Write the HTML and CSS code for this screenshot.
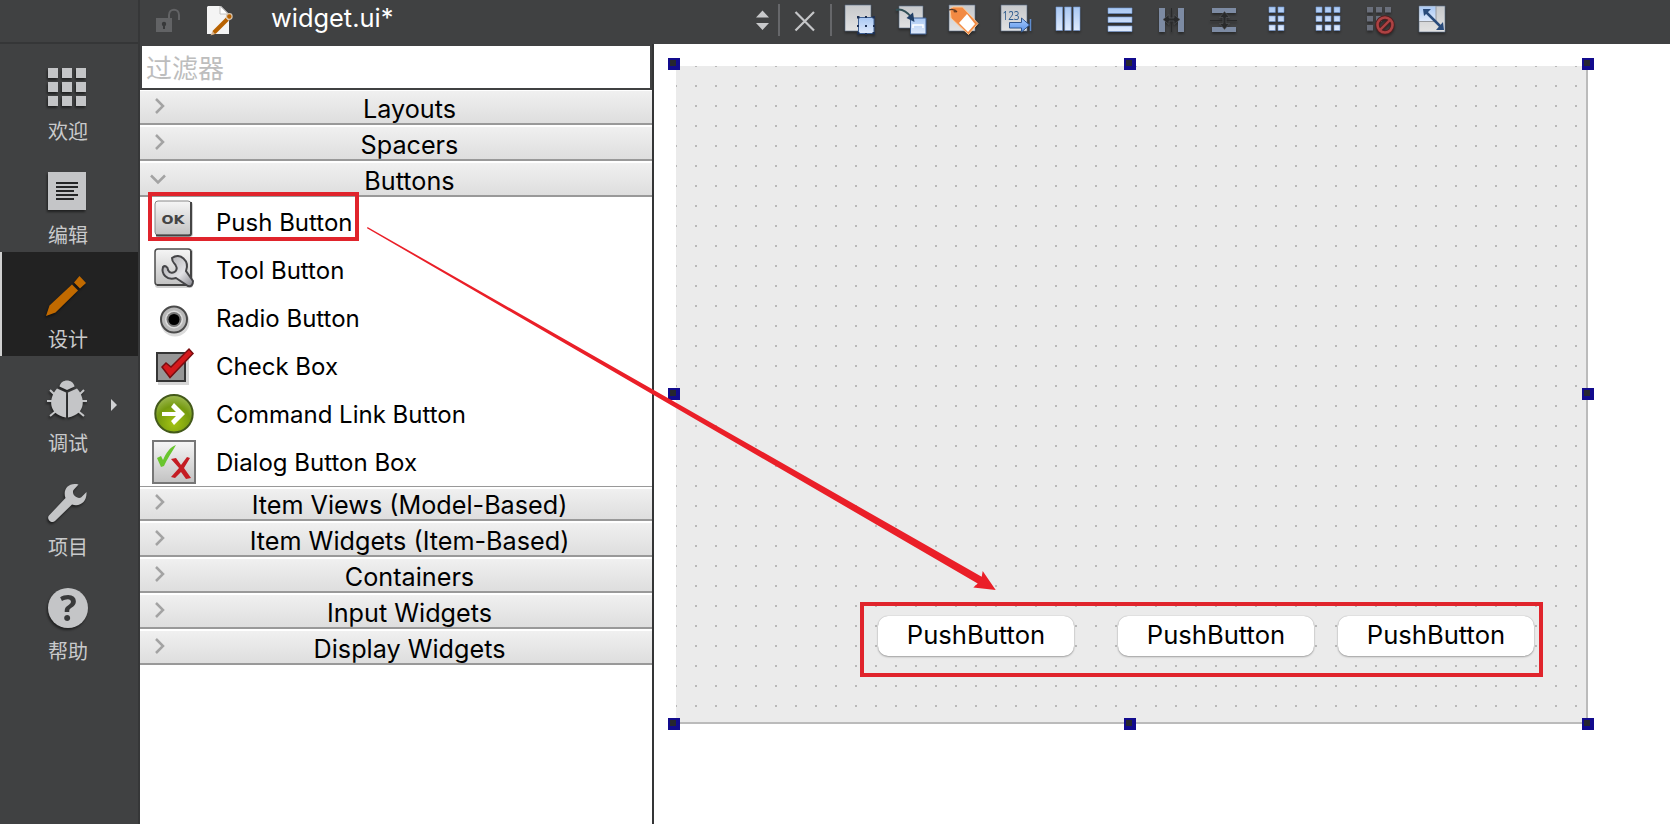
FILE: index.html
```html
<!DOCTYPE html>
<html lang="zh-CN">
<head>
<meta charset="utf-8">
<title>widget.ui</title>
<link rel="stylesheet" href="styles.css">
</head>
<body>
<svg class="defs" width="0" height="0">
  <defs>
    <linearGradient id="paper" x1="0" y1="0" x2="0" y2="1"><stop offset="0" stop-color="#c6c8cb"/><stop offset="1" stop-color="#e2e2e2"/></linearGradient>
    <linearGradient id="blue" x1="0" y1="0" x2="0" y2="1"><stop offset="0" stop-color="#a9c8f3"/><stop offset="1" stop-color="#dfeafc"/></linearGradient>
    <linearGradient id="tile" x1="0" y1="0" x2="0" y2="1"><stop offset="0" stop-color="#f6f6f6"/><stop offset="1" stop-color="#c2c2c2"/></linearGradient>
    <linearGradient id="arrowblue" x1="0" y1="0" x2="0" y2="1"><stop offset="0" stop-color="#a8ccff"/><stop offset="1" stop-color="#5a92e6"/></linearGradient>
    <radialGradient id="green" cx=".5" cy=".75" r=".75"><stop offset="0" stop-color="#a4c412"/><stop offset=".6" stop-color="#759a10"/><stop offset="1" stop-color="#9fba55"/></radialGradient>
    <linearGradient id="steel" x1="0" y1="0" x2="1" y2="1"><stop offset="0" stop-color="#a5a5a7"/><stop offset=".6" stop-color="#e2e2e6"/><stop offset="1" stop-color="#85858c"/></linearGradient>
  </defs>
</svg>
<div class="app">
  <aside class="modes">
    <div class="modes-top"></div>
    <div class="mode">
      <svg class="mode-icon" viewBox="0 0 40 40"><path d="M0 0h10v10H0zM14 0h10v10H14zM28 0h10v10H28zM0 14h10v10H0zM14 14h10v10H14zM28 14h10v10H28zM0 28h10v10H0zM14 28h10v10H14zM28 28h10v10H28z"/></svg>
      <span>欢迎</span>
    </div>
    <div class="mode">
      <svg class="mode-icon" viewBox="0 0 40 40"><path d="M0 0h38v38H0z"/><path class="ink" d="M8 11h22M8 15h22M8 19h18M8 23h22M8 27h18"/></svg>
      <span>编辑</span>
    </div>
    <div class="mode active">
      <svg class="mode-icon orange" viewBox="0 0 40 40"><path d="M-2 40L1.500 29.500L24 8.500L30 14.500L7.500 36.500zM26 6.500L31.500 0L38 7L32 12.500z"/></svg>
      <span>设计</span>
    </div>
    <div class="mode">
      <svg class="mode-icon" viewBox="0 0 40 40"><path d="M11.500 6.500C13-1.500 25-1.500 26.500 6.500L19 10z"/><path d="M9 8.500L18 12.500V37.500C-1 34 1 17 9 8.500zM29 8.500L20 12.500V37.500C39 34 37 17 29 8.500z"/><path class="legs" d="M2 10l5 5M-1 21h6M2 36l6-5M36 10l-5 5M39 21h-6M36 36l-6-5"/></svg>
      <span>调试</span>
      <svg class="mode-more" viewBox="0 0 6 12"><path d="M0 0L6 6L0 12z"/></svg>
    </div>
    <div class="mode">
      <svg class="mode-icon" viewBox="0 0 40 40"><path d="M30.500 .5C20-2 14.500 6 17.500 14L1 31.500C-2 35 3.500 40.500 7 37L24 20.500C32 23 39 18 38.500 8L33 13.500C29 15.500 23 10 25.500 6z"/></svg>
      <span>项目</span>
    </div>
    <div class="mode">
      <svg class="mode-icon" viewBox="0 0 40 40"><circle cx="20" cy="20" r="20"/><text class="question" x="20.300" y="33" text-anchor="middle">?</text></svg>
      <span>帮助</span>
    </div>
  </aside>

  <div class="work">
    <header class="toolbar">
      <svg class="file-icons" viewBox="140 0 120 44"><path d="M156 18h16v14h-16z" fill="#626365"/><path d="M169 20v-5c0-7 10-7 10 0v5" fill="none" stroke="#626365" stroke-width="2"/><circle cx="164" cy="24" r="2.200" fill="#38393a"/><path d="M163 24h2v5h-2z" fill="#38393a"/><path d="M208 6h13l8 8v20h-22V7z" fill="#f4f4f4"/><path d="M220 6v8h8z" fill="#fff" stroke="#b5b5b5" stroke-width=".8"/><path d="M213 30.500l13-13 3 3-13 13-4 1.500z" fill="#b86200"/><circle cx="229.300" cy="16.500" r="2.800" fill="#b86200" stroke="#d7c3ad" stroke-width="1.200"/><path d="M226 17.500l3 3" stroke="#e6d8c8" stroke-width="1"/><path d="M210.500 35.500l2-4.500 2.500 3z" fill="#d8b690"/></svg>
      <span class="file-name">widget.ui*</span>
      <svg class="file-tools" viewBox="740 0 94 44"><path d="M756 17.500L762.500 10.500L769 17.500zM756 23L762.500 30L769 23z" fill="#c8c9cb"/><path d="M778 4h2v32h-2zM830 4h2v32h-2z" fill="#66676a"/><path d="M795.500 12l18.500 18.500M814 12l-18.500 18.500" stroke="#c5c6c8" stroke-width="2.200"/></svg>
      <div class="actions">
        <svg viewBox="0 0 52 44"><path class="paper" d="M11 5h26v26H11z"/><path class="bluebox" d="M24.500 17.500h15.500v16H24.500z"/><path d="M23 16h2.500v2.500H23zM31 16h2v2h-2zM38.500 16H41v2.500h-2.500zM23 25h2v2h-2zM23 32h2.500v2.500H23zM31 25h2v2h-2zM39 25h2v2h-2zM31 33h2v2h-2zM38.500 32H41v2.500h-2.500z" fill="#1f3153"/></svg>
        <svg viewBox="0 0 52 44"><path class="paper" d="M13 6h24v22H13z"/><path class="bluebox" d="M24.500 18h15.500v16H24.500z"/><path d="M10 10C17 8 22 13 26 18" fill="none" stroke="#304f55" stroke-width="2"/><path d="M28.500 22l-8-4 6.500-5.500z" fill="#203e65"/><path d="M27 28v-3h10v3" fill="none" stroke="#fff" stroke-width="1.500"/></svg>
        <svg viewBox="0 0 52 44"><path class="paper" d="M11 5h26v26H11z"/><path d="M12 9l3-2h9.500L40 23.500l-9.500 11L13 18z" fill="#f28a43" stroke="#ffc995" stroke-width="1"/><path d="M29 14l8 10-7 8-9-9z" fill="#fff"/><path d="M11 10c4-2 7 1 8 2" fill="none" stroke="#4e3428" stroke-width="1.300"/><circle cx="17" cy="11" r="1.500" fill="#73401f"/></svg>
        <svg viewBox="0 0 52 44"><path class="paper" d="M11 5h26v26H11z"/><text x="12.500" y="20" textLength="17" lengthAdjust="spacingAndGlyphs" class="tab-number">123</text><path d="M19.500 22.500h12V18l8 7-8 7v-4h-12z" fill="url(#arrowblue)" stroke="#31568d" stroke-width="1"/><path d="M40.500 19v12" stroke="#5f8dd0" stroke-width="1.500"/></svg>
        <svg viewBox="0 0 52 44"><path class="bars" d="M14 7h6.500v23.500H14zM22.700 7h6.500v23.500h-6.500zM31.500 7H38v23.500h-6.500z"/></svg>
        <svg viewBox="0 0 52 44"><path class="bars" d="M14 8h24v5.500H14zM14 17h24v5.500H14zM14 26h24v5.500H14z"/></svg>
        <svg viewBox="0 0 52 44"><path class="dim" d="M13 8h6v24h-6zM32 8h6v24h-6z"/><path d="M25.500 8v24" stroke="#292a2b"/><path d="M17 19.500l6-5v3.500h5v-3.500l6 5-6 5V21h-5v3.500z" fill="#292a2b" stroke="#585a5e" stroke-width=".6"/></svg>
        <svg viewBox="0 0 52 44"><path class="dim" d="M14 8h24v5H14zM14 27h24v5H14z"/><path d="M12 20.500h27" stroke="#292a2b"/><path d="M26.500 11.500l5 6H28v6h3.500l-5 6-5-6H25v-6h-3.500z" fill="#292a2b" stroke="#585a5e" stroke-width=".6"/></svg>
        <svg viewBox="0 0 52 44"><path class="bars" d="M19 7h6.300v5.500H19zM28 7h6v5.500h-6zM19 16h6.300v5.500H19zM28 16h6v5.500h-6zM19 25h6.300v5.500H19zM28 25h6v5.500h-6z"/></svg>
        <svg viewBox="0 0 52 44"><path class="bars" d="M14 7h6v5.500h-6zM23 7h6v5.500h-6zM32 7h6v5.500h-6zM14 16h6v5.500h-6zM23 16h6v5.500h-6zM32 16h6v5.500h-6zM14 25h6v5.500h-6zM23 25h6v5.500h-6zM32 25h6v5.500h-6z"/></svg>
        <svg viewBox="0 0 52 44"><path d="M13 7h6v5.500h-6zM22 7h6v5.500h-6zM31 7h6v5.500h-6zM13 16h6v5.500h-6zM22 16h6v5.500h-6zM13 25h6v5.500h-6z" fill="#6a6f7b"/><g fill="none"><circle cx="31" cy="25" r="7.500" stroke="#501f20" stroke-width="4.500"/><path d="M26 30L36 20" stroke="#501f20" stroke-width="4"/><circle cx="31" cy="25" r="7.500" stroke="#ae4243" stroke-width="2.600"/><path d="M26 30L36 20" stroke="#ae4243" stroke-width="2.400"/></g></svg>
        <svg viewBox="0 0 52 44"><path class="paper" d="M13 6h26v26H13z"/><path d="M13.500 6.500H30V21.500H13.500z" fill="url(#blue)"/><path d="M30 6v15.500H13" fill="none" stroke="#95989d"/><path d="M20 12l15 15" stroke="#294b7b" stroke-width="2.500"/><path d="M17 9h8l-7 7zM38 30h-8l7-8z" fill="#294b7b"/></svg>
      </div>
    </header>

    <div class="body">
      <section class="widget-box">
        <div class="filter">过滤器</div>
        <div class="group"><svg class="chevron" viewBox="0 0 16 18"><path d="M4 2l7 7-7 7"/></svg>Layouts</div>
        <div class="group"><svg class="chevron" viewBox="0 0 16 18"><path d="M4 2l7 7-7 7"/></svg>Spacers</div>
        <div class="group"><svg class="chevron" viewBox="0 0 16 18"><path d="M-1 6.500l7 7 7-7"/></svg>Buttons</div>
        <div class="items">
          <div class="item"><svg viewBox="0 0 48 48"><rect x="4" y="5" width="37" height="35" rx="3" fill="#777" opacity=".35"/><rect x="3" y="4" width="36" height="34" rx="3" fill="url(#tile)" stroke="#888"/><path d="M4 38.500h33q2 0 2-2V5" fill="none" stroke="#444" stroke-width="2"/><text x="9.500" y="27" textLength="23" lengthAdjust="spacingAndGlyphs" class="ok">OK</text></svg>Push Button</div>
          <div class="item"><svg viewBox="0 0 48 48"><rect x="3" y="4" width="38" height="39" rx="3" fill="#777" opacity=".35"/><rect x="3" y="4" width="36" height="36" rx="3" fill="url(#tile)" stroke="#4c4c4c" stroke-width="1.500"/><path d="M39 6v34H5" fill="none" stroke="#444" stroke-width="2"/><path d="M20 13c8-6 18 3 14 13l7 10q0 6-5 5l-12-8c-9 3-15-4-13-11 2-2 5 0 5 3 3 6 11 1 8-4-1-3-4-3-4-8z" fill="url(#steel)" stroke="#454548" stroke-width="2"/></svg>Tool Button</div>
          <div class="item"><svg viewBox="0 0 48 48"><circle cx="23" cy="29" r="14.500" fill="#888" opacity=".3"/><circle cx="22" cy="26.500" r="13" fill="#b9b9b9" stroke="#4a4a4a" stroke-width="2"/><circle cx="22" cy="26.500" r="9" fill="#ddd"/><circle cx="22" cy="26.500" r="7.500" fill="#777"/><circle cx="22" cy="26.500" r="5.500" fill="#000"/></svg>Radio Button</div>
          <div class="item"><svg viewBox="0 0 48 48"><path d="M6 13h31v31H6z" fill="#999" opacity=".4"/><path d="M5 12h28v28H5z" fill="#969696" stroke="#353535" stroke-width="2"/><path d="M10 26l4-4 5 4L37 8l4 4.500-23 24z" fill="#d4191c" stroke="#780d10" stroke-width="1.500"/></svg>Check Box</div>
          <div class="item"><svg viewBox="0 0 48 48"><circle cx="22" cy="24.700" r="18.700" fill="url(#green)" stroke="#43591a" stroke-width="2"/><path d="M10 23h14l-5-5 3-4 11 11-11 11-3-4 5-5H10z" fill="#fff"/></svg>Command Link Button</div>
          <div class="item"><svg viewBox="0 0 48 48"><path d="M1 4h42v42H1z" fill="url(#tile)" stroke="#777" stroke-width="2"/><path d="M5 21l4-2 2 4C14 16 18 10 24 8 20 15 15 22 12 29l-3 1z" fill="#69c52e"/><path d="M19 22l5-1 5 7 6-8 3 1-6 10 7 10-5 1-5-7-6 6-4-1 8-9z" fill="#c41c23"/></svg>Dialog Button Box</div>
        </div>
        <div class="group first"><svg class="chevron" viewBox="0 0 16 18"><path d="M4 2l7 7-7 7"/></svg>Item Views (Model-Based)</div>
        <div class="group"><svg class="chevron" viewBox="0 0 16 18"><path d="M4 2l7 7-7 7"/></svg>Item Widgets (Item-Based)</div>
        <div class="group"><svg class="chevron" viewBox="0 0 16 18"><path d="M4 2l7 7-7 7"/></svg>Containers</div>
        <div class="group"><svg class="chevron" viewBox="0 0 16 18"><path d="M4 2l7 7-7 7"/></svg>Input Widgets</div>
        <div class="group"><svg class="chevron" viewBox="0 0 16 18"><path d="M4 2l7 7-7 7"/></svg>Display Widgets</div>
      </section>

      <main class="editor">
        <div class="form">
          <div class="push b1">PushButton</div>
          <div class="push b2">PushButton</div>
          <div class="push b3">PushButton</div>
          <i class="handle tl"></i><i class="handle tc"></i><i class="handle tr"></i>
          <i class="handle ml"></i><i class="handle mr"></i>
          <i class="handle bl"></i><i class="handle bc"></i><i class="handle br"></i>
        </div>
      </main>
    </div>
  </div>
</div>
<svg class="annotations" viewBox="0 0 1670 824">
  <path d="M150 194h207v45H150zM862 604h679v71H862z" fill="none" stroke="#e0242c" stroke-width="4"/>
  <path d="M367.500 227L981.700 576.700L982.700 571L995.700 590L973.300 587.500L977.700 583.500L367 228.200z" fill="#ea1f28"/>
</svg>
</body>
</html>
```
FILE: styles.css
```css
* { box-sizing: border-box; }
body {
  margin: 0;
  width: 1670px;
  height: 824px;
  overflow: hidden;
  background: #fff;
  color: #000;
  font-family: Inter, "Noto Sans CJK SC", sans-serif;
}
svg { display: block; overflow: visible; flex: none; }
.defs { position: absolute; }
.app { display: flex; height: 824px; }

.modes { width: 140px; background: #404142; border-right: 2px solid #363738; }
.modes-top { height: 44px; border-bottom: 2px solid #353637; }
.mode {
  position: relative;
  display: flex;
  flex-direction: column;
  height: 104px;
  padding: 24px 0 0 48px;
  color: #c9cacc;
  font-size: 20px;
  line-height: 24px;
}
.mode.active { background: #222; box-shadow: inset 2px 0 #d0d0d0; }
.mode-icon { width: 40px; height: 40px; margin-bottom: 12px; fill: #c4c5c7; filter: drop-shadow(-1px 2px 1px rgba(0, 0, 0, .5)); }
.mode-icon.orange { fill: #c16a00; }
.ink { stroke: #242526; stroke-width: 2; }
.legs { stroke: #c4c5c7; stroke-width: 2; }
.question { fill: #38393a; font: bold 35px "Open Sans", sans-serif; }
.mode-more { position: absolute; left: 111px; top: 43px; width: 6px; height: 12px; fill: #d0d1d3; }

.work { flex: 1; display: flex; flex-direction: column; }
.toolbar { display: flex; height: 44px; background: #404142; }
.file-icons { width: 120px; height: 44px; }
.file-name { width: 480px; padding: 2px 0 0 11px; color: #fff; font-size: 25.4px; line-height: 32px; }
.file-tools { width: 94px; height: 44px; }
.actions { display: flex; }
.actions svg { width: 52px; height: 44px; filter: drop-shadow(0 2px 1px rgba(0, 0, 0, .35)); }
.paper { fill: url(#paper); stroke: #596b88; stroke-width: .6; }
.bluebox { fill: url(#blue); stroke: #3d5f93; stroke-width: 1; }
.bars { fill: url(#blue); stroke: #6f95d2; stroke-width: .6; }
.dim { fill: #7d8ba3; }
.tab-number { fill: #2c5a8c; font: 13px "Open Sans", sans-serif; }

.body { flex: 1; display: flex; }
.widget-box { width: 514px; border-right: 2px solid #343536; }
.filter {
  height: 46px;
  padding-left: 4px;
  border: 2px solid #404142;
  background: #fff;
  color: #bdbdbd;
  font-size: 26px;
  line-height: 46px;
}
.group {
  position: relative;
  height: 36px;
  border-top: 2px solid #fff;
  border-bottom: 2px solid #999;
  background: linear-gradient(#f0f0f0, #dedede);
  font-size: 25.2px;
  line-height: 36px;
  text-align: center;
  padding-left: 27px;
}
.filter + .group { height: 35px; border-top-width: 1px; }
.group.first { box-shadow: 0 -1px #999; height: 34px; line-height: 33px; }
.chevron { position: absolute; left: 12px; top: 6px; width: 16px; height: 18px; fill: none; stroke: #a3a3a3; stroke-width: 2.5; }
.first .chevron { top: 4px; }
.items { height: 290px; }
.item { display: flex; align-items: flex-start; height: 48px; padding-left: 12px; gap: 16px; font-size: 24px; line-height: 51px; }
.item svg { width: 48px; height: 48px; }
.ok { font: bold 12.5px "DejaVu Sans", sans-serif; fill: #444; }

.editor { flex: 1; padding: 22px 0 0 22px; }
.form {
  position: relative;
  width: 912px;
  height: 658px;
  border-right: 2px solid #bbb;
  border-bottom: 2px solid #bbb;
  background:
    repeating-linear-gradient(90deg, transparent 0 1px, #ebebeb 1px 19px, transparent 19px 20px),
    repeating-linear-gradient(#b9b9b9 0 1px, #ebebeb 1px 19px, #b9b9b9 19px 20px);
}
.push {
  position: absolute;
  top: 550px;
  width: 196px;
  height: 40px;
  border-radius: 10px;
  background: #fff;
  box-shadow: 0 0 1px rgba(0, 0, 0, .3), 0 1px 2px rgba(0, 0, 0, .3);
  font-size: 25.6px;
  line-height: 38px;
  text-align: center;
}
.b1 { left: 202px; }
.b2 { left: 442px; }
.b3 { left: 662px; }
.handle { position: absolute; width: 12px; height: 12px; background: #26262f; border: 2px solid #120b8d; border-width: 2px 4px 4px 2px; }
.tl, .ml, .bl { left: -8px; }
.tc, .bc { left: 448px; }
.tr, .mr, .br { left: 906px; }
.tl, .tc, .tr { top: -8px; }
.ml, .mr { top: 322px; }
.bl, .bc, .br { top: 652px; }
.annotations { position: absolute; left: 0; top: 0; width: 1670px; height: 824px; pointer-events: none; }
```
